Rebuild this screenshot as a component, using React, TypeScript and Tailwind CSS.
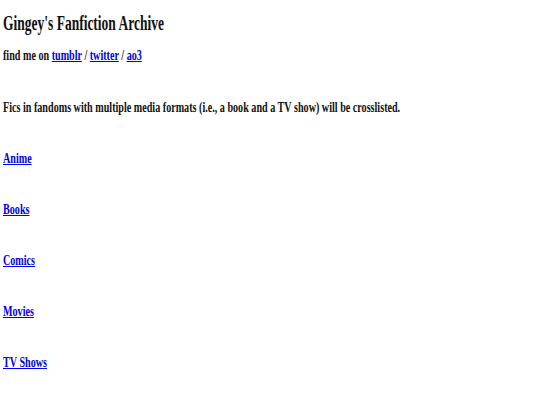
import React from 'react';

const categories = ['Anime', 'Books', 'Comics', 'Movies', 'TV Shows'];

const App: React.FC = () => {
  return (
    <div className="min-h-screen w-full bg-white pl-[3px] pt-[11px] text-[#111] font-['Liberation_Serif','Times_New_Roman',serif]">
      {/* narrow, tall serif face for the whole archive page */}
      <div className="origin-top-left scale-x-[0.675] whitespace-nowrap font-bold">
        <h1 className="text-[20px] leading-[24px]">Gingey's Fanfiction Archive</h1>

        <p className="mt-[10px] text-[15px] leading-[20px]">
          find me on{' '}
          <a href="#" className="text-[#0000ee] underline">tumblr</a>
          {' / '}
          <a href="#" className="text-[#0000ee] underline">twitter</a>
          {' / '}
          <a href="#" className="text-[#0000ee] underline">ao3</a>
        </p>

        <p className="mt-[32px] text-[15px] leading-[20px]">
          Fics in fandoms with multiple media formats (i.e., a book and a TV show) will be crosslisted.
        </p>

        <ul className="mt-[31px] flex flex-col gap-[31px] text-[15px] leading-[20px]">
          {categories.map((name) => (
            <li key={name}>
              <a href="#" className="text-[#0000ee] underline">{name}</a>
            </li>
          ))}
        </ul>
      </div>
    </div>
  );
};

export default App;
